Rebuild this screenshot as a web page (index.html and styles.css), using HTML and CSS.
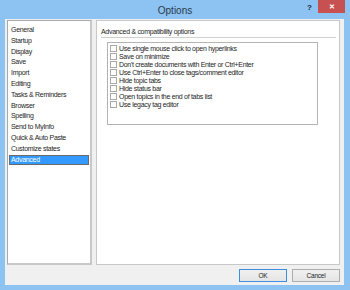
FILE: index.html
```html
<!DOCTYPE html>
<html lang="en">
<head>
    <meta charset="UTF-8">
    <title>Options</title>
    <link rel="stylesheet" href="styles.css">
</head>
<body>
    <div class="window">
        <div class="titlebar">
            <div></div>
            <div class="title">Options</div>
            <div class="controls">
                <span class="help">?</span>
                <span class="close">&#x2715;</span>
            </div>
        </div>
        <div class="client">
            <div class="main">
                <ul class="pages">
                    <li>General</li>
                    <li>Startup</li>
                    <li>Display</li>
                    <li>Save</li>
                    <li>Import</li>
                    <li>Editing</li>
                    <li>Tasks &amp; Reminders</li>
                    <li>Browser</li>
                    <li>Spelling</li>
                    <li>Send to MyInfo</li>
                    <li>Quick &amp; Auto Paste</li>
                    <li>Customize states</li>
                    <li class="selected">Advanced</li>
                </ul>
                <div class="panel">
                    <div class="group-title">Advanced &amp; compatibility options</div>
                    <div class="checklist">
                        <label class="item"><span class="box"></span>Use single mouse click to open hyperlinks</label>
                        <label class="item"><span class="box"></span>Save on minimize</label>
                        <label class="item"><span class="box"></span>Don't create documents with Enter or Ctrl+Enter</label>
                        <label class="item"><span class="box"></span>Use Ctrl+Enter to close tags/comment editor</label>
                        <label class="item"><span class="box"></span>Hide topic tabs</label>
                        <label class="item"><span class="box"></span>Hide status bar</label>
                        <label class="item"><span class="box"></span>Open topics in the end of tabs list</label>
                        <label class="item"><span class="box"></span>Use legacy tag editor</label>
                    </div>
                </div>
            </div>
            <div class="buttons">
                <button class="btn default">OK</button>
                <button class="btn">Cancel</button>
            </div>
        </div>
    </div>
</body>
</html>
```

FILE: styles.css
```css
body {
    margin: 0;
    padding: 0;
    font-family: "Liberation Sans", Arial, sans-serif;
    background-color: #8cc3f2;
}

.window {
    width: 350px;
    height: 290px;
    display: flex;
    flex-direction: column;
    background-color: #8cc3f2;
}

.titlebar {
    height: 19px;
    display: grid;
    grid-template-columns: 1fr auto 1fr;
    align-items: start;
}

.title {
    font-size: 10px;
    color: #2b3a4a;
    line-height: 21px;
}

.controls {
    display: flex;
    justify-content: flex-end;
    align-items: start;
    padding-right: 5px;
}

.help {
    font-size: 8px;
    font-weight: bold;
    color: #223;
    line-height: 16px;
    margin-right: 6px;
}

.close {
    width: 27px;
    height: 13px;
    background-color: #c75050;
    color: #fff;
    font-size: 7px;
    font-weight: bold;
    line-height: 13px;
    text-align: center;
}

.client {
    flex: 1;
    margin: 0 6px 6px 5px;
    background-color: #f0f0f0;
    padding: 1px 4px 3px 2px;
    display: flex;
    flex-direction: column;
    letter-spacing: -0.3px;
}

.main {
    height: 245px;
    display: flex;
    gap: 4px;
}

.pages {
    list-style: none;
    margin: 0;
    padding: 4px 1px 0 1px;
    width: 80px;
    background: #fff;
    border: 1px solid #a9a9a9;
    border-bottom: 2px solid #c8c8c8;
    border-right: 2px solid #c8c8c8;
    font-size: 7px;
    color: #1e1e1e;
}

.pages li {
    height: 10.8px;
    line-height: 10.8px;
    padding-left: 2px;
}

.pages li.selected {
    background-color: #3399ff;
    color: #fff;
    outline: 1px solid #6b6b6b;
    outline-offset: -1px;
}

.panel {
    flex: 1;
    background: #fff;
    border: 1px solid #c8c8c8;
    padding: 7px 3px 0 4px;
}

.group-title {
    font-size: 7px;
    color: #1e1e1e;
    padding-bottom: 2px;
    border-bottom: 1px solid #d0d0d0;
    margin-bottom: 4px;
}

.checklist {
    margin: 0 18px 0 6px;
    height: 76px;
    border: 1px solid #b4b4b4;
    padding: 1px 0 4px 2px;
}

.item {
    display: flex;
    align-items: center;
    height: 8px;
    font-size: 7px;
    color: #1e1e1e;
}

.box {
    width: 5px;
    height: 5px;
    border: 1px solid #a8a8a8;
    background: #fff;
    margin-right: 2px;
}

.buttons {
    display: flex;
    justify-content: flex-end;
    gap: 5px;
    margin-top: 4px;
}

.btn {
    width: 48px;
    height: 13px;
    padding: 0;
    font-family: "Liberation Sans", Arial, sans-serif;
    font-size: 6.5px;
    letter-spacing: -0.2px;
    color: #1e1e1e;
    background: linear-gradient(#f0f0f0, #e5e5e5);
    border: 1px solid #adadad;
}

.btn.default {
    border-color: #3c8ee0;
}
```
